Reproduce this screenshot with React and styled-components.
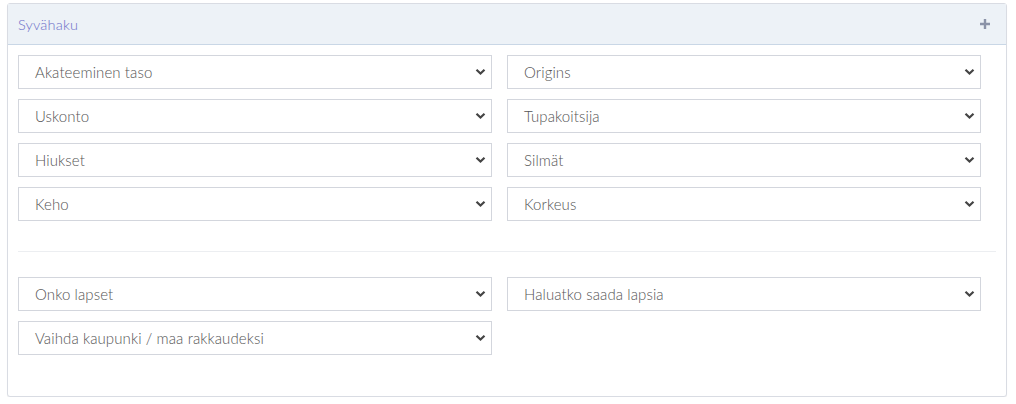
import styled, { createGlobalStyle } from 'styled-components';

const GlobalStyle = createGlobalStyle`
  body {
    margin: 0;
    background: #fff;
    font-family: Lato, "Open Sans", sans-serif;
  }
`;

const topFields = [
  ['Akateeminen taso', 'Origins'],
  ['Uskonto', 'Tupakoitsija'],
  ['Hiukset', 'Silmät'],
  ['Keho', 'Korkeus'],
];

const bottomFields = [
  ['Onko lapset', 'Haluatko saada lapsia'],
  ['Vaihda kaupunki / maa rakkaudeksi', null],
];

const Chevron = () => (
  <svg width="11" height="8" viewBox="0 0 11 8">
    <path d="M1.5 1.8 L5.5 5.6 L9.5 1.8" fill="none" stroke="#444" strokeWidth="2.2" />
  </svg>
);

const PlusIcon = () => (
  <svg width="10" height="10" viewBox="0 0 10 10">
    <path d="M5 0 V10 M0 5 H10" stroke="#8b93a8" strokeWidth="2.4" />
  </svg>
);

const Field = ({ label }) => (
  <SelectBox>
    <span>{label}</span>
    <Chevron />
  </SelectBox>
);

const App = () => {
  return (
    <Page>
      <GlobalStyle />
      <Card>
        <Header>
          <h3 className="title">Syvähaku</h3>
          <PlusIcon />
        </Header>
        <Body>
          <Grid>
            {topFields.flat().map((f, i) => (f ? <Field key={i} label={f} /> : <div key={i} />))}
          </Grid>
          <Divider />
          <Grid>
            {bottomFields.flat().map((f, i) => (f ? <Field key={i} label={f} /> : <div key={i} />))}
          </Grid>
        </Body>
      </Card>
    </Page>
  );
};

const Page = styled.div`
  padding: 3px 9px 0 7px;
`;

const Card = styled.div`
  border: 1px solid #d9dce3;
  border-radius: 3px;
  background: #fff;
  height: 394px;
  box-sizing: border-box;
  box-shadow: 0 1px 1px rgba(0, 0, 0, 0.06);
`;

const Header = styled.div`
  height: 40px;
  background: #edf2f7;
  border-bottom: 1px solid #c9d7e6;
  display: flex;
  align-items: center;
  justify-content: space-between;
  padding: 0 16px 0 10px;

  .title {
    margin: 0;
    font-size: 14.5px;
    font-weight: 300;
    color: #6c70c8;
    letter-spacing: 0.2px;
  }
`;

const Body = styled.div`
  padding: 10px 10px 0 10px;
`;

const Grid = styled.div`
  display: grid;
  grid-template-columns: 474px 474px;
  column-gap: 15px;
  row-gap: 10px;
`;

const SelectBox = styled.div`
  height: 34px;
  box-sizing: border-box;
  border: 1px solid #d3d6dd;
  display: flex;
  align-items: center;
  justify-content: space-between;
  padding: 0 5px 1px 16px;
  font-size: 15px;
  font-weight: 300;
  color: #555;
  letter-spacing: 0.1px;
  cursor: pointer;
`;

const Divider = styled.hr`
  border: none;
  border-top: 1px solid #eceef1;
  margin: 30px 0 25px 0;
`;

export default App;
